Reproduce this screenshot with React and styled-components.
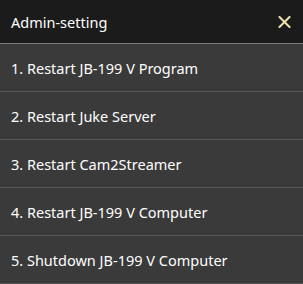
import React from "react";
import styled, { createGlobalStyle } from "styled-components";

const Global = createGlobalStyle`
  html, body { margin: 0; padding: 0; background: #3a3a3a; }
  body { font-family: "Noto Sans", "Open Sans", sans-serif; }
`;

const Panel = styled.div`
  width: 303px;
  height: 284px;
  display: flex;
  flex-direction: column;
  background: #3a3a3a;
  overflow: hidden;
`;

const Header = styled.div`
  height: 43px;
  display: flex;
  align-items: center;
  justify-content: space-between;
  padding: 0 12px 0 11px;
  background: #1b1b1b;
  border-bottom: 1px solid #7d7d7d;
  flex-shrink: 0;
`;

const Title = styled.span`
  color: #ffffff;
  font-size: 14.5px;
`;

const CloseButton = styled.button`
  border: 0;
  background: none;
  padding: 0;
  width: 14px;
  height: 14px;
  display: flex;
  align-items: center;
  justify-content: center;
  cursor: pointer;
`;

const List = styled.ul`
  list-style: none;
  margin: 0;
  padding: 0;
  display: flex;
  flex-direction: column;
`;

const Item = styled.li`
  height: 47px;
  display: flex;
  align-items: center;
  padding: 0 11px;
  color: #ffffff;
  font-size: 14.5px;
  border-bottom: 1px solid #555555;
  flex-shrink: 0;
`;

const items = [
  "1. Restart JB-199 V Program",
  "2. Restart Juke Server",
  "3. Restart Cam2Streamer",
  "4. Restart JB-199 V Computer",
  "5. Shutdown JB-199 V Computer",
];

export default function App() {
  return (
    <>
      <Global />
      <Panel>
        <Header>
          <Title>Admin-setting</Title>
          <CloseButton aria-label="close">
            <svg width="13" height="12" viewBox="0 0 13 12">
              <path d="M1.5 1 L11.5 11 M11.5 1 L1.5 11" stroke="#ede3ad" strokeWidth="2" strokeLinecap="square" />
            </svg>
          </CloseButton>
        </Header>
        <List>
          {items.map((t) => (
            <Item key={t}>{t}</Item>
          ))}
        </List>
      </Panel>
    </>
  );
}
